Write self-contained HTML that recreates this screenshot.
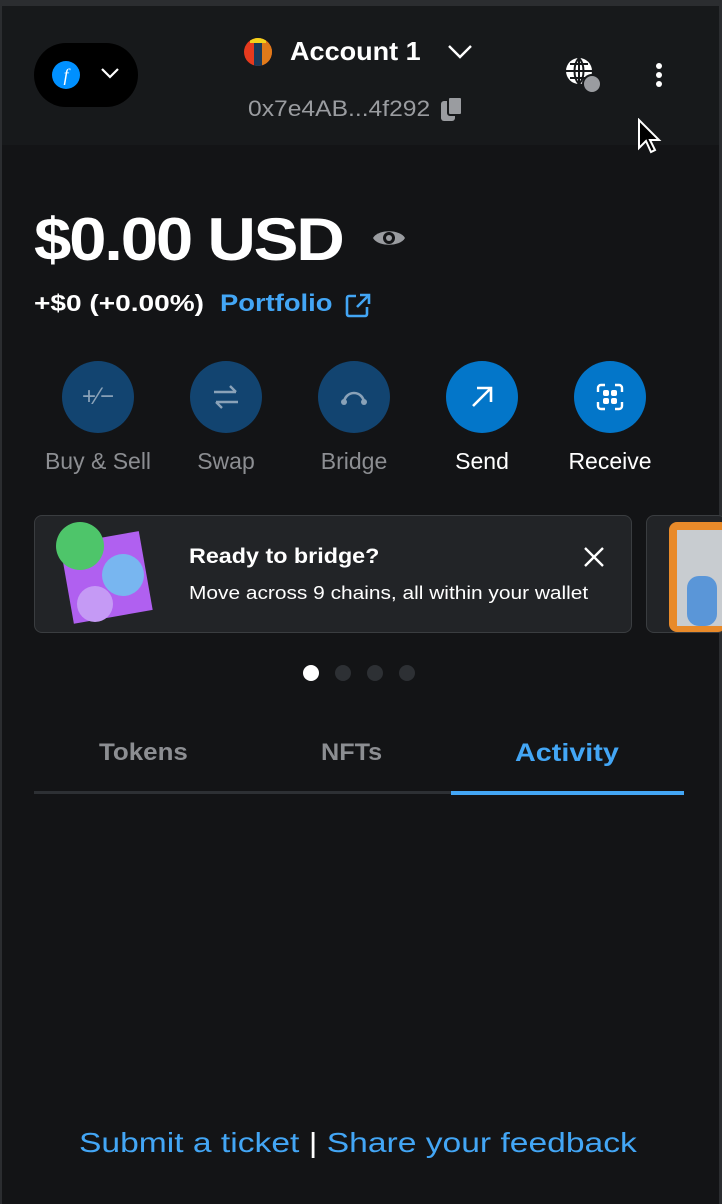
<!DOCTYPE html>
<html><head><style>
*{margin:0;padding:0;box-sizing:border-box}
body{width:722px;height:1204px;background:#131416;font-family:"Liberation Sans",sans-serif;color:#fff;position:relative;overflow:hidden}
.hdr{position:absolute;left:0;top:0;width:722px;height:145px;background:#17191b}
.frame{position:absolute;left:0;top:0;width:722px;height:6px;background:#2b2d30}
.abs{position:absolute;white-space:nowrap;transform-origin:left top}
.btn{position:absolute;top:361px;width:72px;height:72px;border-radius:50%;display:flex;align-items:center;justify-content:center}
.dim{background:#124470}
.on{background:#0376c9}
.lbl{position:absolute;top:448px;font-size:23px;text-align:center;width:130px}
</style></head><body>
<div class="hdr"></div>
<div class="frame"></div>
<div class="abs" style="left:0;top:6px;width:2px;height:1198px;background:#2b2d30"></div>
<div class="abs" style="left:719px;top:6px;width:3px;height:1198px;background:#2b2d30"></div>
<div class="abs" style="left:34px;top:43px;width:104px;height:64px;border-radius:32px;background:#000"></div>
<div class="abs" style="left:52px;top:61px;width:28px;height:28px;border-radius:50%;background:#0090ff;color:#fff;font-style:italic;font-size:18px;text-align:center;line-height:28px;font-family:'Liberation Serif',serif">f</div>
<svg class="abs" style="left:100px;top:66px" width="20" height="14"><path d="M2 3l8 8 8-8" stroke="#fff" stroke-width="2.2" fill="none"/></svg>
<div class="abs" style="left:244px;top:38px;width:28px;height:28px;border-radius:50%;overflow:hidden;background:#e63a1e"><div style="position:absolute;left:10px;top:2px;width:10px;height:26px;background:#1a3a5a"></div><div style="position:absolute;left:18px;top:0;width:10px;height:28px;background:#e07a1a"></div><div style="position:absolute;left:6px;top:0;width:16px;height:5px;background:#f3d21b"></div></div>
<div class="abs" style="left:290px;top:36px;font-size:26px;font-weight:bold;transform:scaleX(1.04)">Account 1</div>
<svg class="abs" style="left:447px;top:44px" width="26" height="16"><path d="M2 2l11 11 11-11" stroke="#fff" stroke-width="2.4" fill="none"/></svg>
<div class="abs" style="left:248px;top:96px;font-size:22px;color:#9a9ca0;transform:scaleX(1.12)">0x7e4AB...4f292</div>
<div class="abs" style="left:441px;top:101px;width:14px;height:20px;border-radius:3px;background:#9a9ca0"></div>
<div class="abs" style="left:447px;top:96px;width:16px;height:20px;border-radius:3px;background:#9a9ca0;border:2px solid #17191b"></div>
<div class="abs" style="left:566px;top:58px;width:26px;height:26px;border-radius:50%;background:#fff"></div>
<svg class="abs" style="left:566px;top:58px" width="26" height="26"><path d="M13 0v26M0 13h26M4 6h18M4 20h18M13 0c-6 6-6 20 0 26M13 0c6 6 6 20 0 26" stroke="#17191b" stroke-width="2" fill="none"/></svg>
<div class="abs" style="left:582px;top:74px;width:20px;height:20px;border-radius:50%;background:#9a9ca0;border:2px solid #17191b"></div>
<div class="abs" style="left:656px;top:63px;width:6px;height:6px;border-radius:50%;background:#fff;box-shadow:0 9px 0 #fff,0 18px 0 #fff"></div>
<svg class="abs" style="left:636px;top:118px" width="26" height="40"><path d="M3 2v28l7-7 5 11 4-2-5-10h9z" fill="#000" stroke="#fff" stroke-width="2"/></svg>

<div class="abs" style="left:34px;top:205px;font-size:60px;font-weight:bold;letter-spacing:-2px;transform:scaleX(1.12)">$0.00 USD</div>
<svg class="abs" style="left:372px;top:226px" width="34" height="24"><path d="M1 12C6 3 28 3 33 12C28 21 6 21 1 12z" fill="#9a9ca0"/><circle cx="17" cy="12" r="6" fill="#131416"/><circle cx="17" cy="12" r="3" fill="#9a9ca0"/></svg>
<div class="abs" style="left:34px;top:290px;font-size:23px;font-weight:bold;transform:scaleX(1.22)">+$0 (+0.00%)</div>
<div class="abs" style="left:220px;top:290px;font-size:24px;font-weight:bold;color:#43a6f5;transform:scaleX(1.14)">Portfolio</div>
<svg class="abs" style="left:344px;top:292px" width="28" height="28"><path d="M12 4H5a2 2 0 0 0-2 2v16a2 2 0 0 0 2 2h16a2 2 0 0 0 2-2v-7M16 3h9v9M25 3L13 15" stroke="#43a6f5" stroke-width="2.6" fill="none"/></svg>

<div class="btn dim" style="left:62px"><span style="color:#8aa2b8;font-size:24px">+⁄−</span></div>
<div class="btn dim" style="left:190px"><svg width="30" height="26"><path d="M3 8h22M19 2l6 6M27 18H5M11 24l-6-6" stroke="#8aa2b8" stroke-width="2.4" fill="none"/></svg></div>
<div class="btn dim" style="left:318px"><svg width="30" height="20"><path d="M5 16a10 10 0 0 1 20 0" stroke="#8aa2b8" stroke-width="2.6" fill="none"/><circle cx="25" cy="15" r="3" fill="#8aa2b8"/><circle cx="5" cy="15" r="3" fill="#8aa2b8"/></svg></div>
<div class="btn on" style="left:446px"><svg width="26" height="26"><path d="M4 22L21 5M8 4h14v14" stroke="#fff" stroke-width="2.6" fill="none"/></svg></div>
<div class="btn on" style="left:574px"><svg width="30" height="30"><path d="M3 10V6a3 3 0 0 1 3-3h4M20 3h4a3 3 0 0 1 3 3v4M27 20v4a3 3 0 0 1-3 3h-4M10 27H6a3 3 0 0 1-3-3v-4" stroke="#fff" stroke-width="2.4" fill="none"/><rect x="8" y="8" width="6" height="6" rx="2" fill="#fff"/><rect x="16" y="8" width="6" height="6" rx="2" fill="#fff"/><rect x="8" y="16" width="6" height="6" rx="2" fill="#fff"/><rect x="16" y="16" width="6" height="6" rx="2" fill="#fff"/></svg></div>
<div class="lbl" style="left:33px;color:#8c8e92">Buy &amp; Sell</div>
<div class="lbl" style="left:161px;color:#8c8e92">Swap</div>
<div class="lbl" style="left:289px;color:#8c8e92">Bridge</div>
<div class="lbl" style="left:417px">Send</div>
<div class="lbl" style="left:545px">Receive</div>

<div class="abs" style="left:34px;top:515px;width:598px;height:118px;border-radius:8px;background:#222427;border:1px solid #3a3d40"></div>
<div class="abs" style="left:60px;top:545px;width:80px;height:80px;background:#b060f0;transform:rotate(-10deg)"></div>
<div class="abs" style="left:56px;top:522px;width:48px;height:48px;border-radius:50%;background:#4ec56a"></div>
<div class="abs" style="left:102px;top:554px;width:42px;height:42px;border-radius:50%;background:#78b6f0"></div>
<div class="abs" style="left:77px;top:586px;width:36px;height:36px;border-radius:50%;background:#c59af5"></div>
<div class="abs" style="left:189px;top:545px;font-size:21px;font-weight:bold;transform:scaleX(1.11)">Ready to bridge?</div>
<div class="abs" style="left:189px;top:583px;font-size:18px;transform:scaleX(1.16)">Move across 9 chains, all within your wallet</div>
<svg class="abs" style="left:583px;top:546px" width="22" height="22"><path d="M2 2l18 18M20 2L2 20" stroke="#fff" stroke-width="2.4"/></svg>
<div class="abs" style="left:646px;top:515px;width:80px;height:118px;border-radius:8px;background:#222427;border:1px solid #3a3d40;overflow:hidden"><div style="position:absolute;left:22px;top:6px;width:60px;height:110px;background:#e88a2a;border-radius:8px"></div><div style="position:absolute;left:30px;top:14px;width:50px;height:96px;background:#c8ccd0"></div><div style="position:absolute;left:40px;top:60px;width:30px;height:50px;background:#5a96d8;border-radius:12px"></div></div>

<div class="abs" style="left:303px;top:665px;width:16px;height:16px;border-radius:50%;background:#fff"></div>
<div class="abs" style="left:335px;top:665px;width:16px;height:16px;border-radius:50%;background:#2d3034"></div>
<div class="abs" style="left:367px;top:665px;width:16px;height:16px;border-radius:50%;background:#2d3034"></div>
<div class="abs" style="left:399px;top:665px;width:16px;height:16px;border-radius:50%;background:#2d3034"></div>

<div class="abs" style="left:99px;top:739px;font-size:24px;font-weight:bold;color:#8c8e92;transform:scaleX(1.08)">Tokens</div>
<div class="abs" style="left:321px;top:739px;font-size:24px;font-weight:bold;color:#8c8e92;transform:scaleX(1.05)">NFTs</div>
<div class="abs" style="left:515px;top:739px;font-size:25px;font-weight:bold;color:#43a6f5;transform:scaleX(1.15)">Activity</div>
<div class="abs" style="left:34px;top:791px;width:650px;height:3px;background:#2d3034"></div>
<div class="abs" style="left:451px;top:791px;width:233px;height:4px;background:#43a6f5"></div>

<div class="abs" style="left:79px;top:1127px;font-size:28px;color:#43a6f5;transform:scaleX(1.2)">Submit a ticket <span style="color:#fff">|</span> Share your feedback</div>
</body></html>
